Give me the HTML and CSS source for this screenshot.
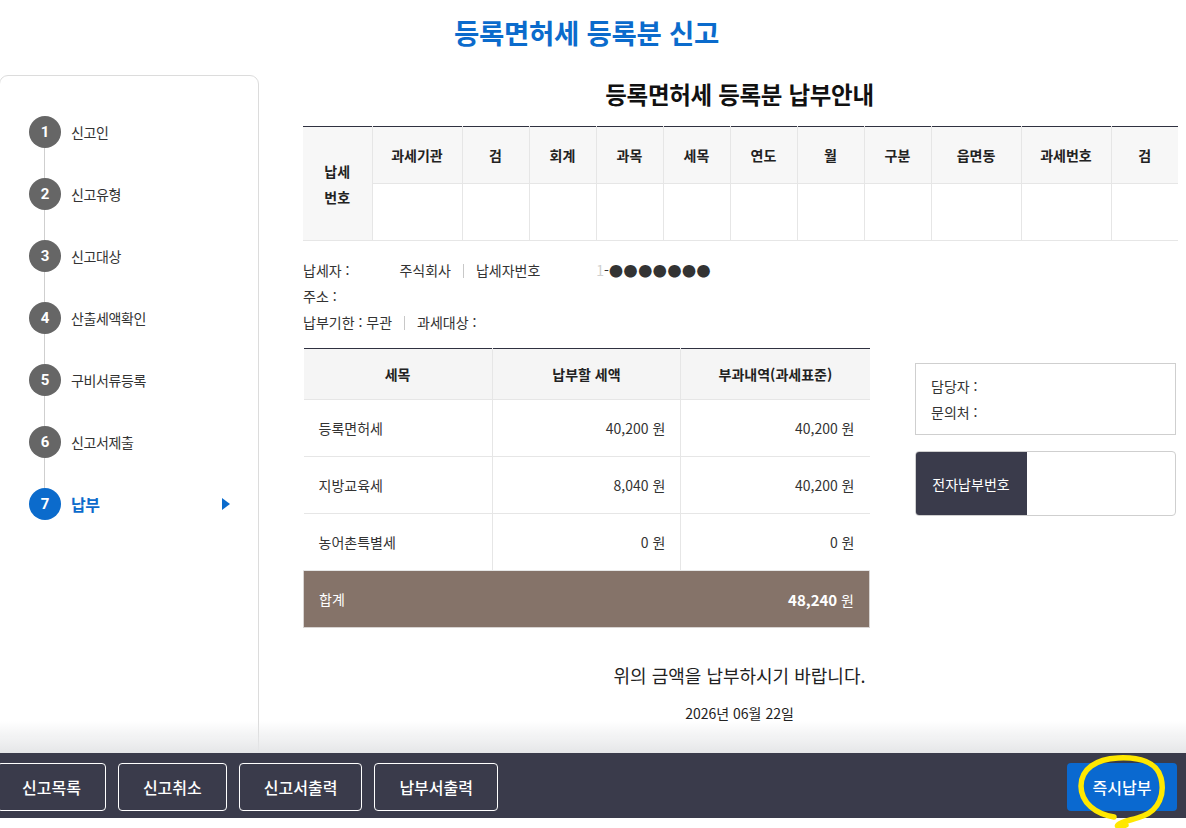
FILE: index.html
```html
<!DOCTYPE html>
<html lang="ko">
<head>
<meta charset="utf-8">
<title>등록면허세 등록분 신고</title>
<link rel="stylesheet" href="styles.css">
</head>
<body>
<header class="page-head">
  <h1 class="page-title">등록면허세 등록분 신고</h1>
</header>

<div class="layout">
  <aside class="sidebar">
    <ol class="steps">
      <li class="step"><span class="num">1</span><span class="label">신고인</span></li>
      <li class="step"><span class="num">2</span><span class="label">신고유형</span></li>
      <li class="step"><span class="num">3</span><span class="label">신고대상</span></li>
      <li class="step"><span class="num">4</span><span class="label">산출세액확인</span></li>
      <li class="step"><span class="num">5</span><span class="label">구비서류등록</span></li>
      <li class="step"><span class="num">6</span><span class="label">신고서제출</span></li>
      <li class="step active"><span class="num">7</span><span class="label">납부</span><span class="arrow"></span></li>
    </ol>
  </aside>

  <main class="content">
    <h2 class="sub-title">등록면허세 등록분 납부안내</h2>

    <table class="tax-no">
      <thead>
        <tr>
          <th class="row-head" rowspan="2">납세<br>번호</th>
          <th class="w90">과세기관</th>
          <th>검</th>
          <th>회계</th>
          <th>과목</th>
          <th>세목</th>
          <th>연도</th>
          <th>월</th>
          <th>구분</th>
          <th class="w90">읍면동</th>
          <th class="w90">과세번호</th>
          <th>검</th>
        </tr>
        <tr class="data-row">
          <td></td><td></td><td></td><td></td><td></td><td></td><td></td><td></td><td></td><td></td><td></td>
        </tr>
      </thead>
    </table>

    <div class="info">
      <p class="info-line">납세자 : <span class="mask m-name"></span>주식회사<span class="sep"></span>납세자번호<span class="mask m-no"></span><span class="faint">1</span>-<span class="dots">●●●●●●●</span></p>
      <p class="info-line">주소 : <span class="mask m-addr"></span></p>
      <p class="info-line">납부기한 : 무관<span class="sep"></span>과세대상 : <span class="mask m-obj"></span></p>
    </div>

    <div class="pay-area">
      <table class="amounts">
        <thead>
          <tr>
            <th>세목</th>
            <th>납부할 세액</th>
            <th>부과내역(과세표준)</th>
          </tr>
        </thead>
        <tbody>
          <tr>
            <td class="name">등록면허세</td>
            <td class="num-cell">40,200 원</td>
            <td class="num-cell">40,200 원</td>
          </tr>
          <tr>
            <td class="name">지방교육세</td>
            <td class="num-cell">8,040 원</td>
            <td class="num-cell">40,200 원</td>
          </tr>
          <tr>
            <td class="name">농어촌특별세</td>
            <td class="num-cell">0 원</td>
            <td class="num-cell">0 원</td>
          </tr>
          <tr class="total">
            <td class="name">합계</td>
            <td colspan="2" class="num-cell"><strong>48,240</strong> 원</td>
          </tr>
        </tbody>
      </table>

      <div class="side-info">
        <div class="contact">
          <p>담당자 :</p>
          <p>문의처 :</p>
        </div>
        <div class="epay">
          <div class="epay-label">전자납부번호</div>
          <div class="epay-value"></div>
        </div>
      </div>
    </div>

    <p class="notice">위의 금액을 납부하시기 바랍니다.</p>
    <p class="date">2026년 06월 22일</p>
  </main>
</div>

<footer class="footer">
  <div class="fade"></div>
  <div class="bar">
    <div class="btns">
      <button class="btn first">신고목록</button>
      <button class="btn">신고취소</button>
      <button class="btn">신고서출력</button>
      <button class="btn">납부서출력</button>
    </div>
    <button class="btn-pay">즉시납부</button>
  </div>
  <div class="under"></div>
  <svg class="mark" width="130" height="80" viewBox="0 0 130 80" aria-hidden="true">
    <path d="M58,69 C40,66 25,55 25,38 C25,21 40,11 62,10 C83,9 101,14 105,30 C109,46 103,62 87,68 C77,72 66,73 62,77 C60,79 64,79 70,77" fill="none" stroke="#ffe800" stroke-width="5.5" stroke-linecap="round" stroke-linejoin="round"/>
  </svg>
</footer>
</body>
</html>
```

FILE: styles.css
```css
* { box-sizing: border-box; }

html, body {
  margin: 0;
  padding: 0;
  background: #fff;
}

body {
  font-family: "Noto Sans CJK KR", "Noto Sans", sans-serif;
  font-size: 14px;
  color: #333;
  overflow: hidden;
}

p { margin: 0; }

.page-head {
  height: 64px;
  padding-right: 13px;
}

.page-title {
  margin: 0;
  text-align: center;
  font-size: 27.5px;
  line-height: 64px;
  font-weight: 700;
  color: #0b6bcc;
  letter-spacing: -0.3px;
}

.layout {
  display: flex;
  align-items: flex-start;
  margin-top: 11px;
}

/* Sidebar */
.sidebar {
  width: 260px;
  height: 720px;
  margin-left: -1px;
  border: 1px solid #dcdcdc;
  border-radius: 9px;
  padding: 40px 0 0 1px;
  flex-shrink: 0;
}

.steps {
  list-style: none;
  margin: 0;
  padding: 0 0 0 28px;
  position: relative;
}

.steps::before {
  content: "";
  position: absolute;
  left: 43px;
  top: 16px;
  height: 372px;
  border-left: 1px solid #cfcfcf;
}

.step {
  display: flex;
  align-items: center;
  height: 32px;
  margin-bottom: 30px;
  position: relative;
}

.num {
  width: 32px;
  height: 32px;
  border-radius: 50%;
  background: #666;
  color: #fff;
  font-family: "Roboto", "Noto Sans", sans-serif;
  font-weight: 700;
  font-size: 15px;
  line-height: 32px;
  text-align: center;
  flex-shrink: 0;
}

.label {
  margin-left: 10px;
  font-size: 14px;
  color: #333;
  letter-spacing: -0.4px;
}

.step.active .num { background: #0b6bcc; }

.step.active .label {
  color: #0b6bcc;
  font-weight: 700;
  font-size: 16px;
}

.arrow {
  margin-left: auto;
  margin-right: 28px;
  width: 0;
  height: 0;
  border-top: 6px solid transparent;
  border-bottom: 6px solid transparent;
  border-left: 8px solid #0b6bcc;
}

/* Content */
.content {
  width: 873px;
  margin-left: 44px;
}

.sub-title {
  margin: 0 0 13px;
  text-align: center;
  font-size: 23.5px;
  line-height: 38px;
  font-weight: 700;
  color: #111;
  letter-spacing: -0.3px;
}

.tax-no {
  width: 100%;
  border-collapse: collapse;
  border-top: 1px solid #2f3140;
  table-layout: fixed;
}

.tax-no th {
  height: 57px;
  background: #f7f7f7;
  border: 1px solid #e6e6e6;
  border-top: none;
  font-size: 14px;
  font-weight: 700;
  color: #222;
  width: 67px;
  padding: 0;
}

.tax-no th.w90 { width: 90px; }

.tax-no th.row-head {
  width: 69px;
  line-height: 26px;
  border-left: none;
}

.tax-no tr th:last-child { border-right: none; }

.tax-no td {
  height: 57px;
  border: 1px solid #e6e6e6;
  background: #fff;
}

.tax-no .data-row td:last-child { border-right: none; }

.info {
  margin-top: 16px;
}

.info-line {
  font-size: 14px;
  line-height: 26px;
  color: #333;
  white-space: nowrap;
}

.mask {
  display: inline-block;
  vertical-align: middle;
  height: 10px;
}

.m-name { width: 46px; }
.m-no { width: 56px; }
.m-addr { width: 420px; }
.m-obj { width: 300px; }

.faint { color: #cfcfcf; }

.dots { letter-spacing: 0.6px; }

.sep {
  display: inline-block;
  width: 1px;
  height: 14px;
  background: #c8c8c8;
  margin: 0 12px;
  vertical-align: -2px;
}

/* Amount table */
.pay-area {
  display: flex;
  align-items: flex-start;
  margin-top: 13px;
}

.amounts {
  width: 567px;
  border-collapse: collapse;
  table-layout: fixed;
  border-top: 1px solid #2f3140;
  flex-shrink: 0;
}

.amounts th {
  height: 51px;
  background: #f5f5f5;
  border: 1px solid #e6e6e6;
  border-top: none;
  font-size: 14px;
  font-weight: 700;
  color: #222;
}

.amounts th:first-child,
.amounts td:first-child { border-left: none; }

.amounts th:last-child,
.amounts td:last-child { border-right: none; }

.amounts td {
  height: 57px;
  border: 1px solid #e6e6e6;
  font-size: 14px;
  color: #333;
}

.amounts td.name {
  padding-left: 15px;
}

.amounts td.num-cell {
  text-align: right;
  padding-right: 15px;
}

.amounts tr.total td {
  background: #857369;
  color: #fff;
  border: 1px solid #d8d4d2;
  font-size: 14px;
}

.amounts tr.total td:first-child { border-right: none; }
.amounts tr.total td.num-cell { border-left: none; }

.amounts tr.total strong {
  font-weight: 700;
  font-size: 15px;
}

.side-info {
  width: 261px;
  margin-left: 45px;
  padding-top: 15px;
}

.contact {
  border: 1px solid #cfcfcf;
  padding: 9px 15px;
  height: 72px;
}

.contact p {
  font-size: 14px;
  line-height: 26px;
  color: #333;
}

.epay {
  display: flex;
  height: 65px;
  margin-top: 16px;
  border: 1px solid #cfcfcf;
  border-radius: 4px;
  overflow: hidden;
}

.epay-label {
  width: 112px;
  margin: -1px 0 -1px -1px;
  background: #3a3b4b;
  color: #fff;
  font-size: 14px;
  display: flex;
  align-items: center;
  justify-content: center;
  border-radius: 4px 0 0 4px;
}

.epay-value { flex: 1; }

.notice {
  margin-top: 34px;
  text-align: center;
  font-size: 18px;
  line-height: 26px;
  color: #222;
}

.date {
  margin-top: 12px;
  text-align: center;
  font-size: 14px;
  line-height: 26px;
  color: #222;
}

/* Footer */
.footer {
  position: fixed;
  left: 0;
  right: 0;
  bottom: 0;
}

.fade {
  height: 32px;
  background: linear-gradient(to bottom, rgba(230, 231, 233, 0), #e5e6e8);
}

.bar {
  height: 65px;
  background: #3a3b4b;
  display: flex;
  justify-content: space-between;
  align-items: flex-start;
  padding: 10px 9px 0 0;
}

.btns {
  display: flex;
  gap: 12px;
}

.btn {
  height: 48px;
  padding: 0 24px;
  background: transparent;
  color: #fff;
  border: 1px solid #fff;
  border-radius: 4px;
  font-family: "Noto Sans CJK KR", "Noto Sans", sans-serif;
  font-size: 16px;
  font-weight: 500;
}

.btn.first { margin-left: -3px; }

.btn-pay {
  height: 48px;
  width: 110px;
  background: #0a69d0;
  color: #fff;
  border: none;
  border-radius: 4px;
  font-family: "Noto Sans CJK KR", "Noto Sans", sans-serif;
  font-size: 16px;
  font-weight: 500;
}

.under {
  height: 10px;
  background: #fff;
}

.mark {
  position: absolute;
  right: 0;
  bottom: 0;
  pointer-events: none;
}
```
